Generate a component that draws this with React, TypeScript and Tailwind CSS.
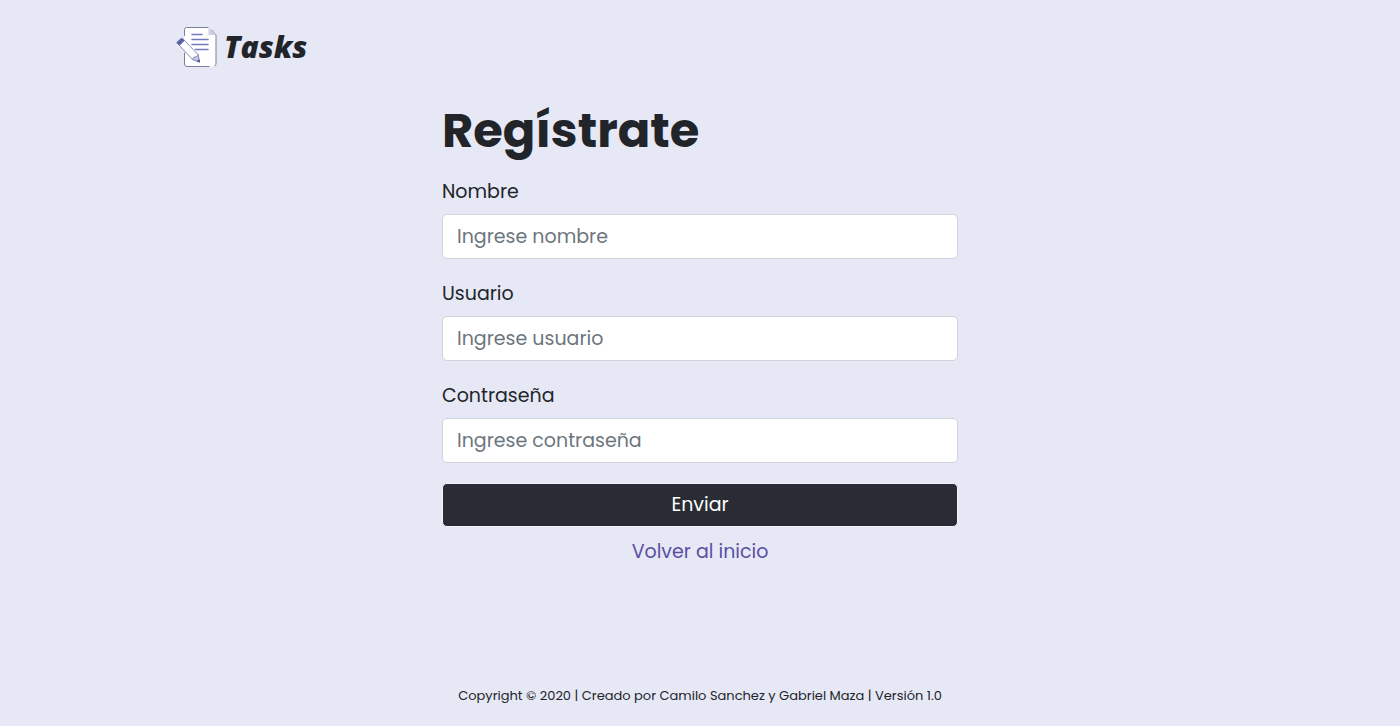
import React from "react";

type Field = { id: string; label: string; placeholder: string; type: string };

const fields: Field[] = [
  { id: "nombre", label: "Nombre", placeholder: "Ingrese nombre", type: "text" },
  { id: "usuario", label: "Usuario", placeholder: "Ingrese usuario", type: "text" },
  { id: "contrasena", label: "Contraseña", placeholder: "Ingrese contraseña", type: "password" },
];

function Logo() {
  return (
    <svg viewBox="0 0 42 42" className="h-[42px] w-[42px]" fill="none" aria-hidden="true">
      <path d="M11 1.5h22.500l7.500 7.500V38a2.500 2.500 0 0 1-2.500 2.500H12A2.500 2.500 0 0 1 9.500 38V3A1.500 1.500 0 0 1 11 1.500Z" fill="#fff" />
      <path
        d="M9.500 9.500V3.500Q9.500 1.500 11.500 1.500H33M36.500 4l4.500 5V37q0 2-1 3M9.500 27v11q0 2.500 2.500 2.500h22"
        stroke="#7b7f9f"
        strokeLinecap="round"
      />
      <path d="M33.500 1.500v7.500H41Z" fill="#cdd0e8" />
      <path d="M17 8.500h10M17 13.500h16M17 18.500h16M20.500 23.500h12.500" stroke="#7479bb" strokeWidth="1.500" strokeLinecap="round" />
      <path d="M4.500 19.500 9.500 14.500 23 28.500 24.500 36 17.500 33.500Z" fill="#fff" stroke="#8b90ba" strokeLinejoin="round" />
      <path d="M17.500 33.500q.5-3 2.800-2.600t2.700-2.400L24.500 36Z" fill="#c3c6e2" stroke="#8b90ba" strokeLinejoin="round" />
      <path d="m22.500 35 2 1-.5-2Z" fill="#4a529e" stroke="#4a529e" />
      <path d="M1.600 16.200 5.600 12.400q1.200-.9 2.200 0l1.700 1.900-5.200 5.200-2.500-2.300q-.7-.5-.2-1Z" fill="#5a62a8" />
    </svg>
  );
}

export default function App() {
  return (
    <div className="flex min-h-screen flex-col bg-[#e6e8f5] font-['Poppins','Inter',sans-serif] text-[#212529]">
      <header className="mx-auto w-full max-w-[1050px] pt-[26px]">
        <a href="#inicio" className="inline-flex items-center gap-[7px]">
          <Logo />
          <span className="font-['Open_Sans',sans-serif] text-[30px] leading-[42px] font-extrabold italic">Tasks</span>
        </a>
      </header>

      <main className="mx-auto w-full max-w-[516px] grow pt-[26px]">
        <h1 className="mb-4 text-5xl leading-[60px] font-bold">Regístrate</h1>
        <form onSubmit={(event) => event.preventDefault()}>
          {fields.map((field) => (
            <div key={field.id} className="mb-5">
              <label htmlFor={field.id} className="mb-2 block text-[19px] leading-[29px]">
                {field.label}
              </label>
              <input
                id={field.id}
                type={field.type}
                placeholder={field.placeholder}
                className="block h-[45px] w-full rounded-[5px] border border-[#ced4da] bg-white px-[14px] text-[19px] placeholder:text-[#6c757d] placeholder:opacity-100"
              />
            </div>
          ))}
          <button type="submit" className="block h-11 w-full rounded-[5px] border border-[#f3f4fb] bg-[#292c34] text-[19px] text-white">
            Enviar
          </button>
        </form>
        <div className="mt-2 text-center text-[19px] leading-[34px]">
          <a href="#inicio" className="text-[#5a4fa3]">
            Volver al inicio
          </a>
        </div>
      </main>

      <footer className="pb-5 text-center text-[13px] leading-5">Copyright © 2020 | Creado por Camilo Sanchez y Gabriel Maza | Versión 1.0</footer>
    </div>
  );
}
